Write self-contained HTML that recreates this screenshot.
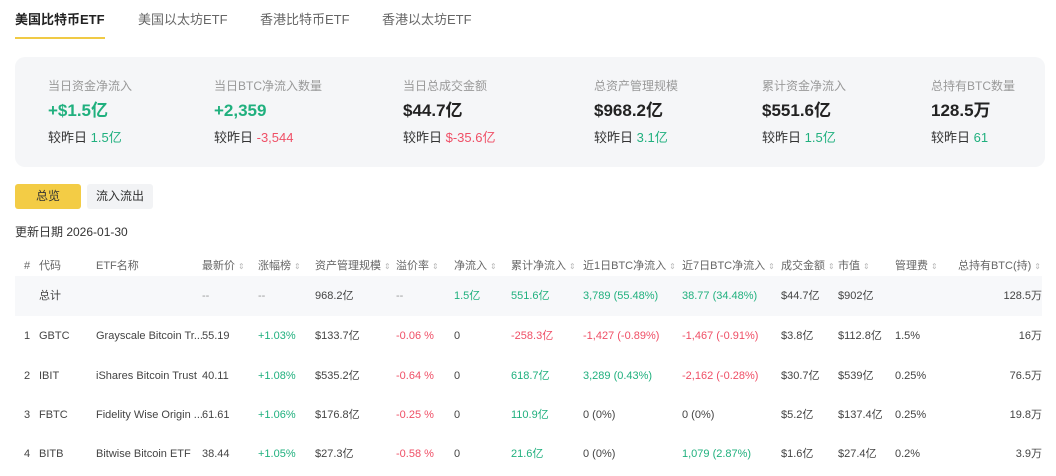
<!DOCTYPE html>
<html><head><meta charset="utf-8">
<style>
*{margin:0;padding:0;box-sizing:border-box}
body{width:1056px;height:476px;background:#fff;font-family:"Liberation Sans","Noto Sans CJK SC",sans-serif;color:#333;position:relative;overflow:hidden}
.a{position:absolute;white-space:nowrap}
.tab{top:11px;font-size:13px;line-height:18px;color:#666}
.box{left:15px;top:57px;width:1030px;height:110px;background:#f5f6f8;border-radius:10px}
.lab{top:78px;font-size:12px;line-height:16px;color:#999}
.val{top:100px;font-size:17px;line-height:22px;font-weight:bold;color:#222}
.sub{top:129px;font-size:13px;line-height:17px;color:#333}
.t{font-size:11px;line-height:14px;color:#444}
.h{font-size:11px;line-height:14px;color:#666;top:259px}
.s{color:#bbb;font-size:8px;margin-left:3px}
.g,.a.g,.a.t.g,span.g{color:#20b07e}
.r,.a.r,.a.t.r,span.r{color:#ef4f66}
</style></head><body>
<div class="a tab" style="left:15px;color:#222;font-weight:bold">美国比特币ETF</div>
<div class="a tab" style="left:138px">美国以太坊ETF</div>
<div class="a tab" style="left:260px">香港比特币ETF</div>
<div class="a tab" style="left:382px">香港以太坊ETF</div>
<div class="a" style="left:15px;top:37px;width:90px;height:2px;background:#f0ca45"></div>

<div class="a box"></div>
<div class="a lab" style="left:48px">当日资金净流入</div>
<div class="a val g" style="left:48px">+$1.5亿</div>
<div class="a sub" style="left:48px">较昨日 <span class="g">1.5亿</span></div>
<div class="a lab" style="left:214px">当日BTC净流入数量</div>
<div class="a val g" style="left:214px">+2,359</div>
<div class="a sub" style="left:214px">较昨日 <span class="r">-3,544</span></div>
<div class="a lab" style="left:403px">当日总成交金额</div>
<div class="a val" style="left:403px">$44.7亿</div>
<div class="a sub" style="left:403px">较昨日 <span class="r">$-35.6亿</span></div>
<div class="a lab" style="left:594px">总资产管理规模</div>
<div class="a val" style="left:594px">$968.2亿</div>
<div class="a sub" style="left:594px">较昨日 <span class="g">3.1亿</span></div>
<div class="a lab" style="left:762px">累计资金净流入</div>
<div class="a val" style="left:762px">$551.6亿</div>
<div class="a sub" style="left:762px">较昨日 <span class="g">1.5亿</span></div>
<div class="a lab" style="left:931px">总持有BTC数量</div>
<div class="a val" style="left:931px">128.5万</div>
<div class="a sub" style="left:931px">较昨日 <span class="g">61</span></div>

<div class="a" style="left:15px;top:184px;width:66px;height:25px;background:#f3cc45;border-radius:3px;font-size:12px;line-height:25px;text-align:center;color:#333">总览</div>
<div class="a" style="left:87px;top:184px;width:66px;height:25px;background:#f2f3f5;border-radius:3px;font-size:12px;line-height:25px;text-align:center;color:#333">流入流出</div>
<div class="a" style="left:15px;top:224px;font-size:12px;line-height:16px;color:#333">更新日期 2026-01-30</div>

<div class="a h" style="left:24px">#</div>
<div class="a h" style="left:39px">代码</div>
<div class="a h" style="left:96px">ETF名称</div>
<div class="a h" style="left:202px">最新价<span class="s">⇕</span></div>
<div class="a h" style="left:258px">涨幅榜<span class="s">⇕</span></div>
<div class="a h" style="left:315px">资产管理规模<span class="s">⇕</span></div>
<div class="a h" style="left:396px">溢价率<span class="s">⇕</span></div>
<div class="a h" style="left:454px">净流入<span class="s">⇕</span></div>
<div class="a h" style="left:511px">累计净流入<span class="s">⇕</span></div>
<div class="a h" style="left:583px">近1日BTC净流入<span class="s">⇕</span></div>
<div class="a h" style="left:682px">近7日BTC净流入<span class="s">⇕</span></div>
<div class="a h" style="left:781px">成交金额<span class="s">⇕</span></div>
<div class="a h" style="left:838px">市值<span class="s">⇕</span></div>
<div class="a h" style="left:895px">管理费<span class="s">⇕</span></div>
<div class="a h" style="right:15px">总持有BTC(持)<span class="s">⇕</span></div>

<div class="a" style="left:15px;top:276px;width:1027px;height:40px;background:#f7f8fa"></div>

<div class="a t" style="top:289px;left:39px">总计</div>
<div class="a t" style="top:289px;left:202px;color:#999">--</div>
<div class="a t" style="top:289px;left:258px;color:#999">--</div>
<div class="a t" style="top:289px;left:315px">968.2亿</div>
<div class="a t" style="top:289px;left:396px;color:#999">--</div>
<div class="a t g" style="top:289px;left:454px">1.5亿</div>
<div class="a t g" style="top:289px;left:511px">551.6亿</div>
<div class="a t g" style="top:289px;left:583px">3,789 (55.48%)</div>
<div class="a t g" style="top:289px;left:682px">38.77 (34.48%)</div>
<div class="a t" style="top:289px;left:781px">$44.7亿</div>
<div class="a t" style="top:289px;left:838px">$902亿</div>
<div class="a t" style="top:289px;right:14px">128.5万</div>

<div class="a t" style="top:329px;left:24px">1</div>
<div class="a t" style="top:329px;left:39px">GBTC</div>
<div class="a t" style="top:329px;left:96px">Grayscale Bitcoin Tr...</div>
<div class="a t" style="top:329px;left:202px">55.19</div>
<div class="a t g" style="top:329px;left:258px">+1.03%</div>
<div class="a t" style="top:329px;left:315px">$133.7亿</div>
<div class="a t r" style="top:329px;left:396px">-0.06 %</div>
<div class="a t" style="top:329px;left:454px">0</div>
<div class="a t r" style="top:329px;left:511px">-258.3亿</div>
<div class="a t r" style="top:329px;left:583px">-1,427 (-0.89%)</div>
<div class="a t r" style="top:329px;left:682px">-1,467 (-0.91%)</div>
<div class="a t" style="top:329px;left:781px">$3.8亿</div>
<div class="a t" style="top:329px;left:838px">$112.8亿</div>
<div class="a t" style="top:329px;left:895px">1.5%</div>
<div class="a t" style="top:329px;right:14px">16万</div>

<div class="a t" style="top:369px;left:24px">2</div>
<div class="a t" style="top:369px;left:39px">IBIT</div>
<div class="a t" style="top:369px;left:96px">iShares Bitcoin Trust</div>
<div class="a t" style="top:369px;left:202px">40.11</div>
<div class="a t g" style="top:369px;left:258px">+1.08%</div>
<div class="a t" style="top:369px;left:315px">$535.2亿</div>
<div class="a t r" style="top:369px;left:396px">-0.64 %</div>
<div class="a t" style="top:369px;left:454px">0</div>
<div class="a t g" style="top:369px;left:511px">618.7亿</div>
<div class="a t g" style="top:369px;left:583px">3,289 (0.43%)</div>
<div class="a t r" style="top:369px;left:682px">-2,162 (-0.28%)</div>
<div class="a t" style="top:369px;left:781px">$30.7亿</div>
<div class="a t" style="top:369px;left:838px">$539亿</div>
<div class="a t" style="top:369px;left:895px">0.25%</div>
<div class="a t" style="top:369px;right:14px">76.5万</div>

<div class="a t" style="top:408px;left:24px">3</div>
<div class="a t" style="top:408px;left:39px">FBTC</div>
<div class="a t" style="top:408px;left:96px">Fidelity Wise Origin ...</div>
<div class="a t" style="top:408px;left:202px">61.61</div>
<div class="a t g" style="top:408px;left:258px">+1.06%</div>
<div class="a t" style="top:408px;left:315px">$176.8亿</div>
<div class="a t r" style="top:408px;left:396px">-0.25 %</div>
<div class="a t" style="top:408px;left:454px">0</div>
<div class="a t g" style="top:408px;left:511px">110.9亿</div>
<div class="a t" style="top:408px;left:583px">0 (0%)</div>
<div class="a t" style="top:408px;left:682px">0 (0%)</div>
<div class="a t" style="top:408px;left:781px">$5.2亿</div>
<div class="a t" style="top:408px;left:838px">$137.4亿</div>
<div class="a t" style="top:408px;left:895px">0.25%</div>
<div class="a t" style="top:408px;right:14px">19.8万</div>

<div class="a t" style="top:447px;left:24px">4</div>
<div class="a t" style="top:447px;left:39px">BITB</div>
<div class="a t" style="top:447px;left:96px">Bitwise Bitcoin ETF</div>
<div class="a t" style="top:447px;left:202px">38.44</div>
<div class="a t g" style="top:447px;left:258px">+1.05%</div>
<div class="a t" style="top:447px;left:315px">$27.3亿</div>
<div class="a t r" style="top:447px;left:396px">-0.58 %</div>
<div class="a t" style="top:447px;left:454px">0</div>
<div class="a t g" style="top:447px;left:511px">21.6亿</div>
<div class="a t" style="top:447px;left:583px">0 (0%)</div>
<div class="a t g" style="top:447px;left:682px">1,079 (2.87%)</div>
<div class="a t" style="top:447px;left:781px">$1.6亿</div>
<div class="a t" style="top:447px;left:838px">$27.4亿</div>
<div class="a t" style="top:447px;left:895px">0.2%</div>
<div class="a t" style="top:447px;right:14px">3.9万</div>
</body></html>
